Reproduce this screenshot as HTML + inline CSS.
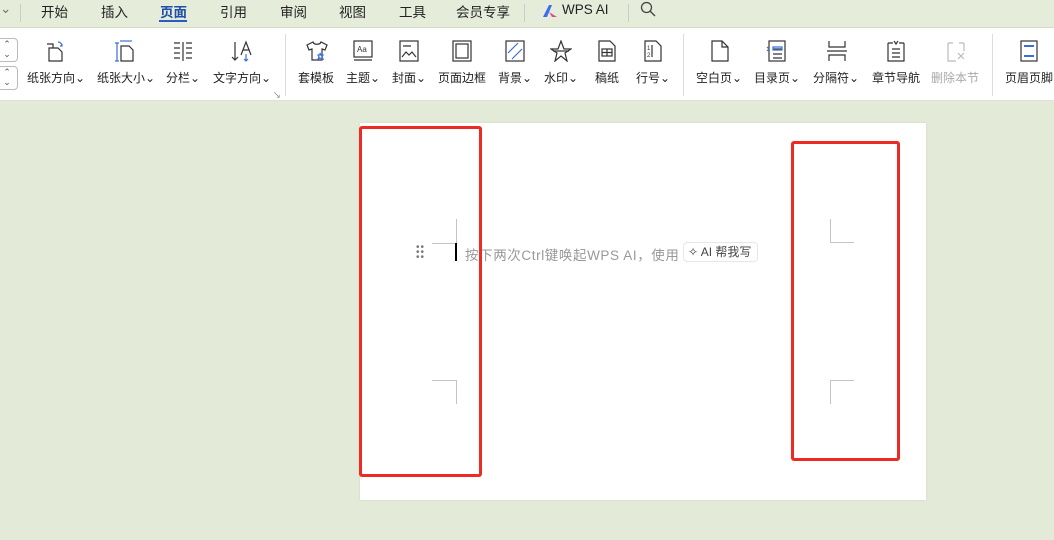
<!DOCTYPE html><html><head><meta charset="utf-8"><style>
body{margin:0;width:1054px;height:540px;overflow:hidden;background:#e3ead8;font-family:"Liberation Sans","Noto Sans CJK SC",sans-serif;position:relative}
.tb{position:absolute;left:0;top:0;width:1054px;height:27px;background:#e5ecda;border-bottom:1px solid #d2d9c8}
.t{position:absolute;top:1px;font-size:13.5px;color:#222}
.rb{position:absolute;left:0;top:28px;width:1054px;height:72px;background:#fff;border-bottom:1px solid #dde3d4}
.l{position:absolute;top:69px;font-size:12px;color:#222;white-space:nowrap}
.ic{position:absolute;top:40px}
.sep{position:absolute;top:34px;width:1px;height:62px;background:#dcdcdc}
.pg{position:absolute;left:360px;top:123px;width:566px;height:377px;background:#fff;box-shadow:0 0 2px #cfd6c6}
.r{position:absolute;border:3px solid #ee2a24;border-radius:3px}
.m{position:absolute;background:#c4c4c4}
</style></head><body>
<div class="tb">
<span class="t" style="left:0;color:#777">⌄</span>
<div style="position:absolute;left:20px;top:4px;width:1px;height:18px;background:#ccc"></div>
<span class="t" style="left:41px">开始</span><span class="t" style="left:101px">插入</span>
<span class="t" style="left:160px;color:#1f4fa8;font-weight:bold">页面</span>
<div style="position:absolute;left:159px;top:20px;width:28px;height:2px;background:#2a5cc4"></div>
<span class="t" style="left:220px">引用</span><span class="t" style="left:280px">审阅</span><span class="t" style="left:339px">视图</span><span class="t" style="left:399px">工具</span><span class="t" style="left:456px">会员专享</span>
<div style="position:absolute;left:524px;top:4px;width:1px;height:18px;background:#ccc"></div>
<svg style="position:absolute;left:542px;top:4px" width="16" height="14"><path d="M1 13 L7 1 L10 1 L5 13Z" fill="#3b6df0"/><path d="M7 8 L15 13 L10 13Z" fill="#e04a8c"/></svg>
<span class="t" style="left:562px;top:2px">WPS AI</span>
<div style="position:absolute;left:628px;top:4px;width:1px;height:18px;background:#ccc"></div>
<svg style="position:absolute;left:640px;top:1px" width="16" height="16"><circle cx="6.5" cy="6.5" r="5" fill="none" stroke="#444" stroke-width="1.3"/><path d="M10 10 L15 15" stroke="#444" stroke-width="1.3"/></svg>
</div>
<div class="rb"></div>
<div style="position:absolute;left:-4px;top:38px;width:20px;height:22px;border:1px solid #bbb;border-radius:4px;background:#fff;font-size:9px;color:#555;line-height:10px;text-align:center">⌃<br>⌄</div>
<div style="position:absolute;left:-4px;top:66px;width:20px;height:22px;border:1px solid #bbb;border-radius:4px;background:#fff;font-size:9px;color:#555;line-height:10px;text-align:center">⌃<br>⌄</div>
<svg class="ic" style="left:45px" width="22" height="22" fill="none" stroke="#333" stroke-width="1.2"><path d="M2 4h6v4M4 8h9l4 4v9H4z"/><path d="M13 2a4 4 0 0 1 4 4M15 6l2 0 0-2" stroke="#3a6fd8"/></svg>
<span class="l" style="left:27px">纸张方向⌄</span>
<svg class="ic" style="left:115px" width="22" height="22" fill="none" stroke="#333" stroke-width="1.2"><path d="M2 3v18M0 3h4M0 21h4" stroke="#3a6fd8"/><path d="M5 1h12" stroke="#3a6fd8"/><path d="M6 6h8l4 4v11H6z"/></svg>
<span class="l" style="left:97px">纸张大小⌄</span>
<svg class="ic" style="left:172px" width="22" height="22" stroke="#333" stroke-width="1.2"><path d="M2 3h6M2 8h6M2 13h6M2 18h6M14 3h6M14 8h6M14 13h6M14 18h6M11 2v19"/></svg>
<span class="l" style="left:166px">分栏⌄</span>
<svg class="ic" style="left:231px" width="24" height="22" fill="none" stroke="#333" stroke-width="1.2"><path d="M4 2v18M1 17l3 3 3-3"/><path d="M10 15l5-13 5 13M12 10h6"/><path d="M15 14v7M13 19l2 2 2-2" stroke="#3a6fd8"/></svg>
<span class="l" style="left:213px">文字方向⌄</span>
<span style="position:absolute;left:273px;top:90px;font-size:8px;color:#777">↘</span>
<div class="sep" style="left:285px"></div>
<svg class="ic" style="left:305px" width="24" height="22" fill="none" stroke="#333" stroke-width="1.2"><path d="M8 2l-6 3 2 5 3-1v11h10V9l3 1 2-5-6-3c-1 3-7 3-8 0z"/><path d="M15 13l1 2 2 0-1 2 1 2-3-1-2 1 1-2-1-2 2 0z" stroke="#3a6fd8"/></svg>
<span class="l" style="left:298px">套模板</span>
<svg class="ic" style="left:352px" width="22" height="22" fill="none" stroke="#333" stroke-width="1.2"><rect x="2" y="1" width="18" height="16"/><path d="M2 20h18"/><text x="5" y="12" font-size="8" fill="#333" stroke="none" font-family="Liberation Sans">Aa</text></svg>
<span class="l" style="left:346px">主题⌄</span>
<svg class="ic" style="left:398px" width="22" height="22" fill="none" stroke="#333" stroke-width="1.2"><rect x="2" y="1" width="18" height="20"/><path d="M5 6h8M4 17l4-5 3 3 3-3 4 5"/></svg>
<span class="l" style="left:392px">封面⌄</span>
<svg class="ic" style="left:451px" width="22" height="22" fill="none" stroke="#333" stroke-width="1.2"><rect x="2" y="1" width="18" height="20"/><rect x="5" y="4" width="12" height="14"/></svg>
<span class="l" style="left:438px">页面边框</span>
<svg class="ic" style="left:504px" width="22" height="22" fill="none" stroke="#333" stroke-width="1.2"><rect x="2" y="1" width="18" height="20"/><path d="M4 13l10-10M8 19l10-10" stroke="#3a6fd8"/></svg>
<span class="l" style="left:498px">背景⌄</span>
<svg class="ic" style="left:550px" width="22" height="22" fill="none" stroke="#333" stroke-width="1.2"><path d="M11 1l3 8h7l-6 4 2 8-6-5-6 5 2-8-6-4h7z"/><path d="M3 11h16"/></svg>
<span class="l" style="left:544px">水印⌄</span>
<svg class="ic" style="left:596px" width="22" height="22" fill="none" stroke="#333" stroke-width="1.2"><path d="M3 1h11l5 5v15H3z"/><rect x="6" y="9" width="10" height="7"/><path d="M11 9v7M6 12.5h10"/></svg>
<span class="l" style="left:595px">稿纸</span>
<svg class="ic" style="left:642px" width="22" height="22" fill="none" stroke="#333" stroke-width="1.2"><path d="M3 1h11l5 5v15H3z"/><path d="M10 5v12"/><text x="5" y="10" font-size="6" fill="#333" stroke="none">1</text><text x="5" y="17" font-size="6" fill="#333" stroke="none">2</text></svg>
<span class="l" style="left:636px">行号⌄</span>
<div class="sep" style="left:683px"></div>
<svg class="ic" style="left:709px" width="22" height="22" fill="none" stroke="#333" stroke-width="1.2"><path d="M3 1h10l6 6v14H3z"/><path d="M13 1v6h6"/></svg>
<span class="l" style="left:696px">空白页⌄</span>
<svg class="ic" style="left:766px" width="22" height="22" fill="none" stroke="#333" stroke-width="1.2"><rect x="3" y="1" width="16" height="20"/><path d="M7 9h9M7 14h9M7 18h9"/><path d="M1 7l2 2-2 2M7 7h9v3H7z" stroke="#3a6fd8"/></svg>
<span class="l" style="left:754px">目录页⌄</span>
<svg class="ic" style="left:826px" width="22" height="22" fill="none" stroke="#333" stroke-width="1.2"><path d="M3 1v6h16V1M3 21v-6h16v6M1 11h20"/></svg>
<span class="l" style="left:813px">分隔符⌄</span>
<svg class="ic" style="left:885px" width="22" height="22" fill="none" stroke="#333" stroke-width="1.2"><path d="M3 3h5M14 3h5M3 3v18h16V3M7 9h8M7 13h8M7 17h8M9 1l2 3 2-3"/></svg>
<span class="l" style="left:872px">章节导航</span>
<svg class="ic" style="left:945px" width="22" height="22" fill="none" stroke="#bbb" stroke-width="1.2"><path d="M3 3h5M14 3h5M3 3v18h8M19 3v8M13 13l6 6M19 13l-6 6"/></svg>
<span class="l" style="left:931px;color:#aaa">删除本节</span>
<div class="sep" style="left:992px"></div>
<svg class="ic" style="left:1018px" width="22" height="22" fill="none" stroke="#333" stroke-width="1.2"><rect x="3" y="1" width="16" height="20"/><path d="M6 6h10M6 16h10" stroke="#3a6fd8" stroke-width="2"/></svg>
<span class="l" style="left:1005px">页眉页脚</span>

<div class="pg"></div>
<div class="m" style="left:456px;top:219px;width:1px;height:24px"></div><div class="m" style="left:432px;top:243px;width:24px;height:1px"></div>
<div class="m" style="left:432px;top:380px;width:24px;height:1px"></div><div class="m" style="left:456px;top:380px;width:1px;height:24px"></div>
<div class="m" style="left:830px;top:219px;width:1px;height:24px"></div><div class="m" style="left:830px;top:242px;width:24px;height:1px"></div>
<div class="m" style="left:830px;top:380px;width:24px;height:1px"></div><div class="m" style="left:830px;top:380px;width:1px;height:24px"></div>
<div style="position:absolute;left:416px;top:245px;font-size:10px;color:#777;line-height:5px;letter-spacing:1px">••<br>••<br>••</div>
<div style="position:absolute;left:455px;top:243px;width:2px;height:18px;background:#000"></div>
<span style="position:absolute;left:465px;top:244px;font-size:13.5px;letter-spacing:0.6px;color:#999;white-space:nowrap">按下两次Ctrl键唤起WPS AI，使用</span>
<div style="position:absolute;left:683px;top:242px;width:75px;height:20px;border:1px solid #e4e6f0;border-radius:4px;font-size:12px;color:#444;line-height:19px;padding-left:4px;box-sizing:border-box">✧ AI 帮我写</div>
<div class="r" style="left:359px;top:126px;width:117px;height:345px"></div>
<div class="r" style="left:791px;top:141px;width:103px;height:314px"></div>
</body></html>
